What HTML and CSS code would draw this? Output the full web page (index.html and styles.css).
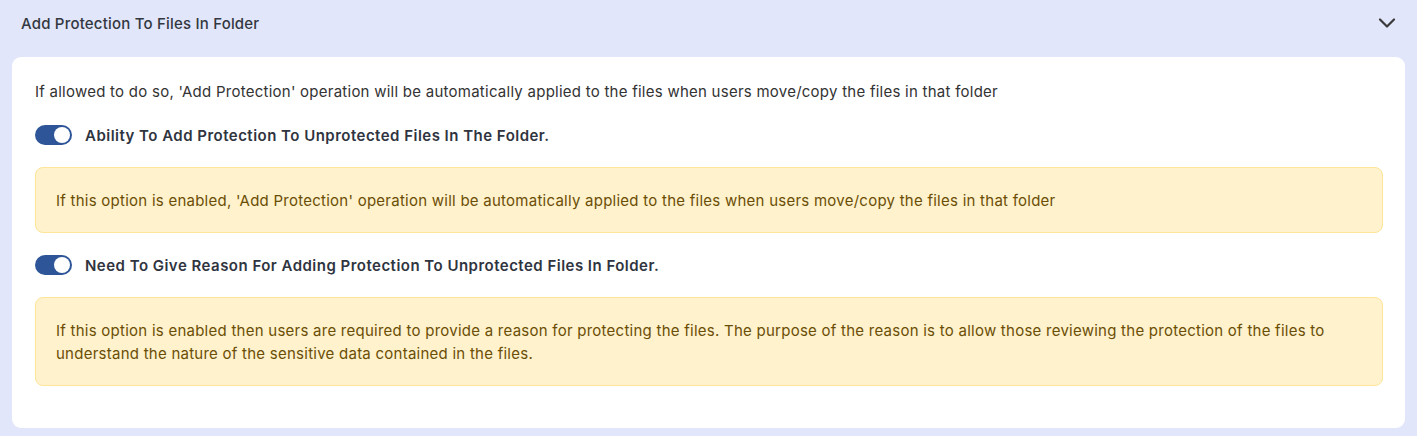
FILE: index.html
```html
<!DOCTYPE html>
<html lang="en">
<head>
<meta charset="utf-8">
<title>Add Protection To Files In Folder</title>
<link rel="stylesheet" href="styles.css">
</head>
<body>
<section class="panel">
  <header class="panel-header">
    <h2 class="panel-title">Add Protection To Files In Folder</h2>
    <svg class="chevron" width="18" height="12" viewBox="0 0 18 12" aria-hidden="true">
      <path d="M2 2.5 L9 9.5 L16 2.5" fill="none" stroke="#3a3a3a" stroke-width="2.2" stroke-linecap="round" stroke-linejoin="round"/>
    </svg>
  </header>
  <div class="panel-body">
    <p class="intro">If allowed to do so, 'Add Protection' operation will be automatically applied to the files when users move/copy the files in that folder</p>

    <div class="option">
      <span class="toggle on"><span class="knob"></span></span>
      <span class="option-label">Ability To Add Protection To Unprotected Files In The Folder.</span>
    </div>
    <div class="notice">If this option is enabled, 'Add Protection' operation will be automatically applied to the files when users move/copy the files in that folder</div>

    <div class="option">
      <span class="toggle on"><span class="knob"></span></span>
      <span class="option-label">Need To Give Reason For Adding Protection To Unprotected Files In Folder.</span>
    </div>
    <div class="notice">If this option is enabled then users are required to provide a reason for protecting the files. The purpose of the reason is to allow those reviewing the protection of the files to understand the nature of the sensitive data contained in the files.</div>
  </div>
</section>
</body>
</html>
```

FILE: styles.css
```css
html, body {
  margin: 0;
  padding: 0;
}
body {
  background: #e1e6fb;
  font-family: Inter, "Noto Sans", "Liberation Sans", sans-serif;
  color: #333333;
  width: 1417px;
  height: 436px;
  overflow: hidden;
}
.panel {
  padding: 0 12px 8px 12px;
}
.panel-header {
  height: 46px;
  display: flex;
  align-items: center;
  justify-content: space-between;
  padding: 0 9px 0 9px;
}
.panel-title {
  margin: 0;
  font-size: 15px;
  font-weight: 500;
  color: #333840;
  letter-spacing: 0.2px;
}
.chevron {
  display: block;
}
.panel-body {
  margin-top: 11px;
  background: #ffffff;
  border-radius: 9px;
  padding: 25px 22px 0 23px;
  height: 371px;
  box-sizing: border-box;
}
.intro {
  margin: 0 0 23px 0;
  font-size: 15px;
  line-height: 20px;
  color: #333333;
  letter-spacing: 0.25px;
}
.option {
  display: flex;
  align-items: center;
  gap: 13px;
  height: 20px;
  margin-bottom: 22px;
}
.toggle {
  width: 37px;
  height: 20px;
  border-radius: 10px;
  background: #2e5597;
  position: relative;
  flex: none;
}
.knob {
  position: absolute;
  top: 2px;
  right: 2px;
  width: 16px;
  height: 16px;
  border-radius: 50%;
  background: #ffffff;
}
.option-label {
  font-size: 15px;
  font-weight: 600;
  color: #2f3440;
  letter-spacing: 0.48px;
}
.notice {
  background: #fff2cc;
  border: 1px solid #fde59a;
  border-radius: 8px;
  padding: 21px 20px 20px 20px;
  font-size: 15px;
  line-height: 23px;
  color: #6b4e06;
  letter-spacing: 0.25px;
  margin-bottom: 22px;
}
```
